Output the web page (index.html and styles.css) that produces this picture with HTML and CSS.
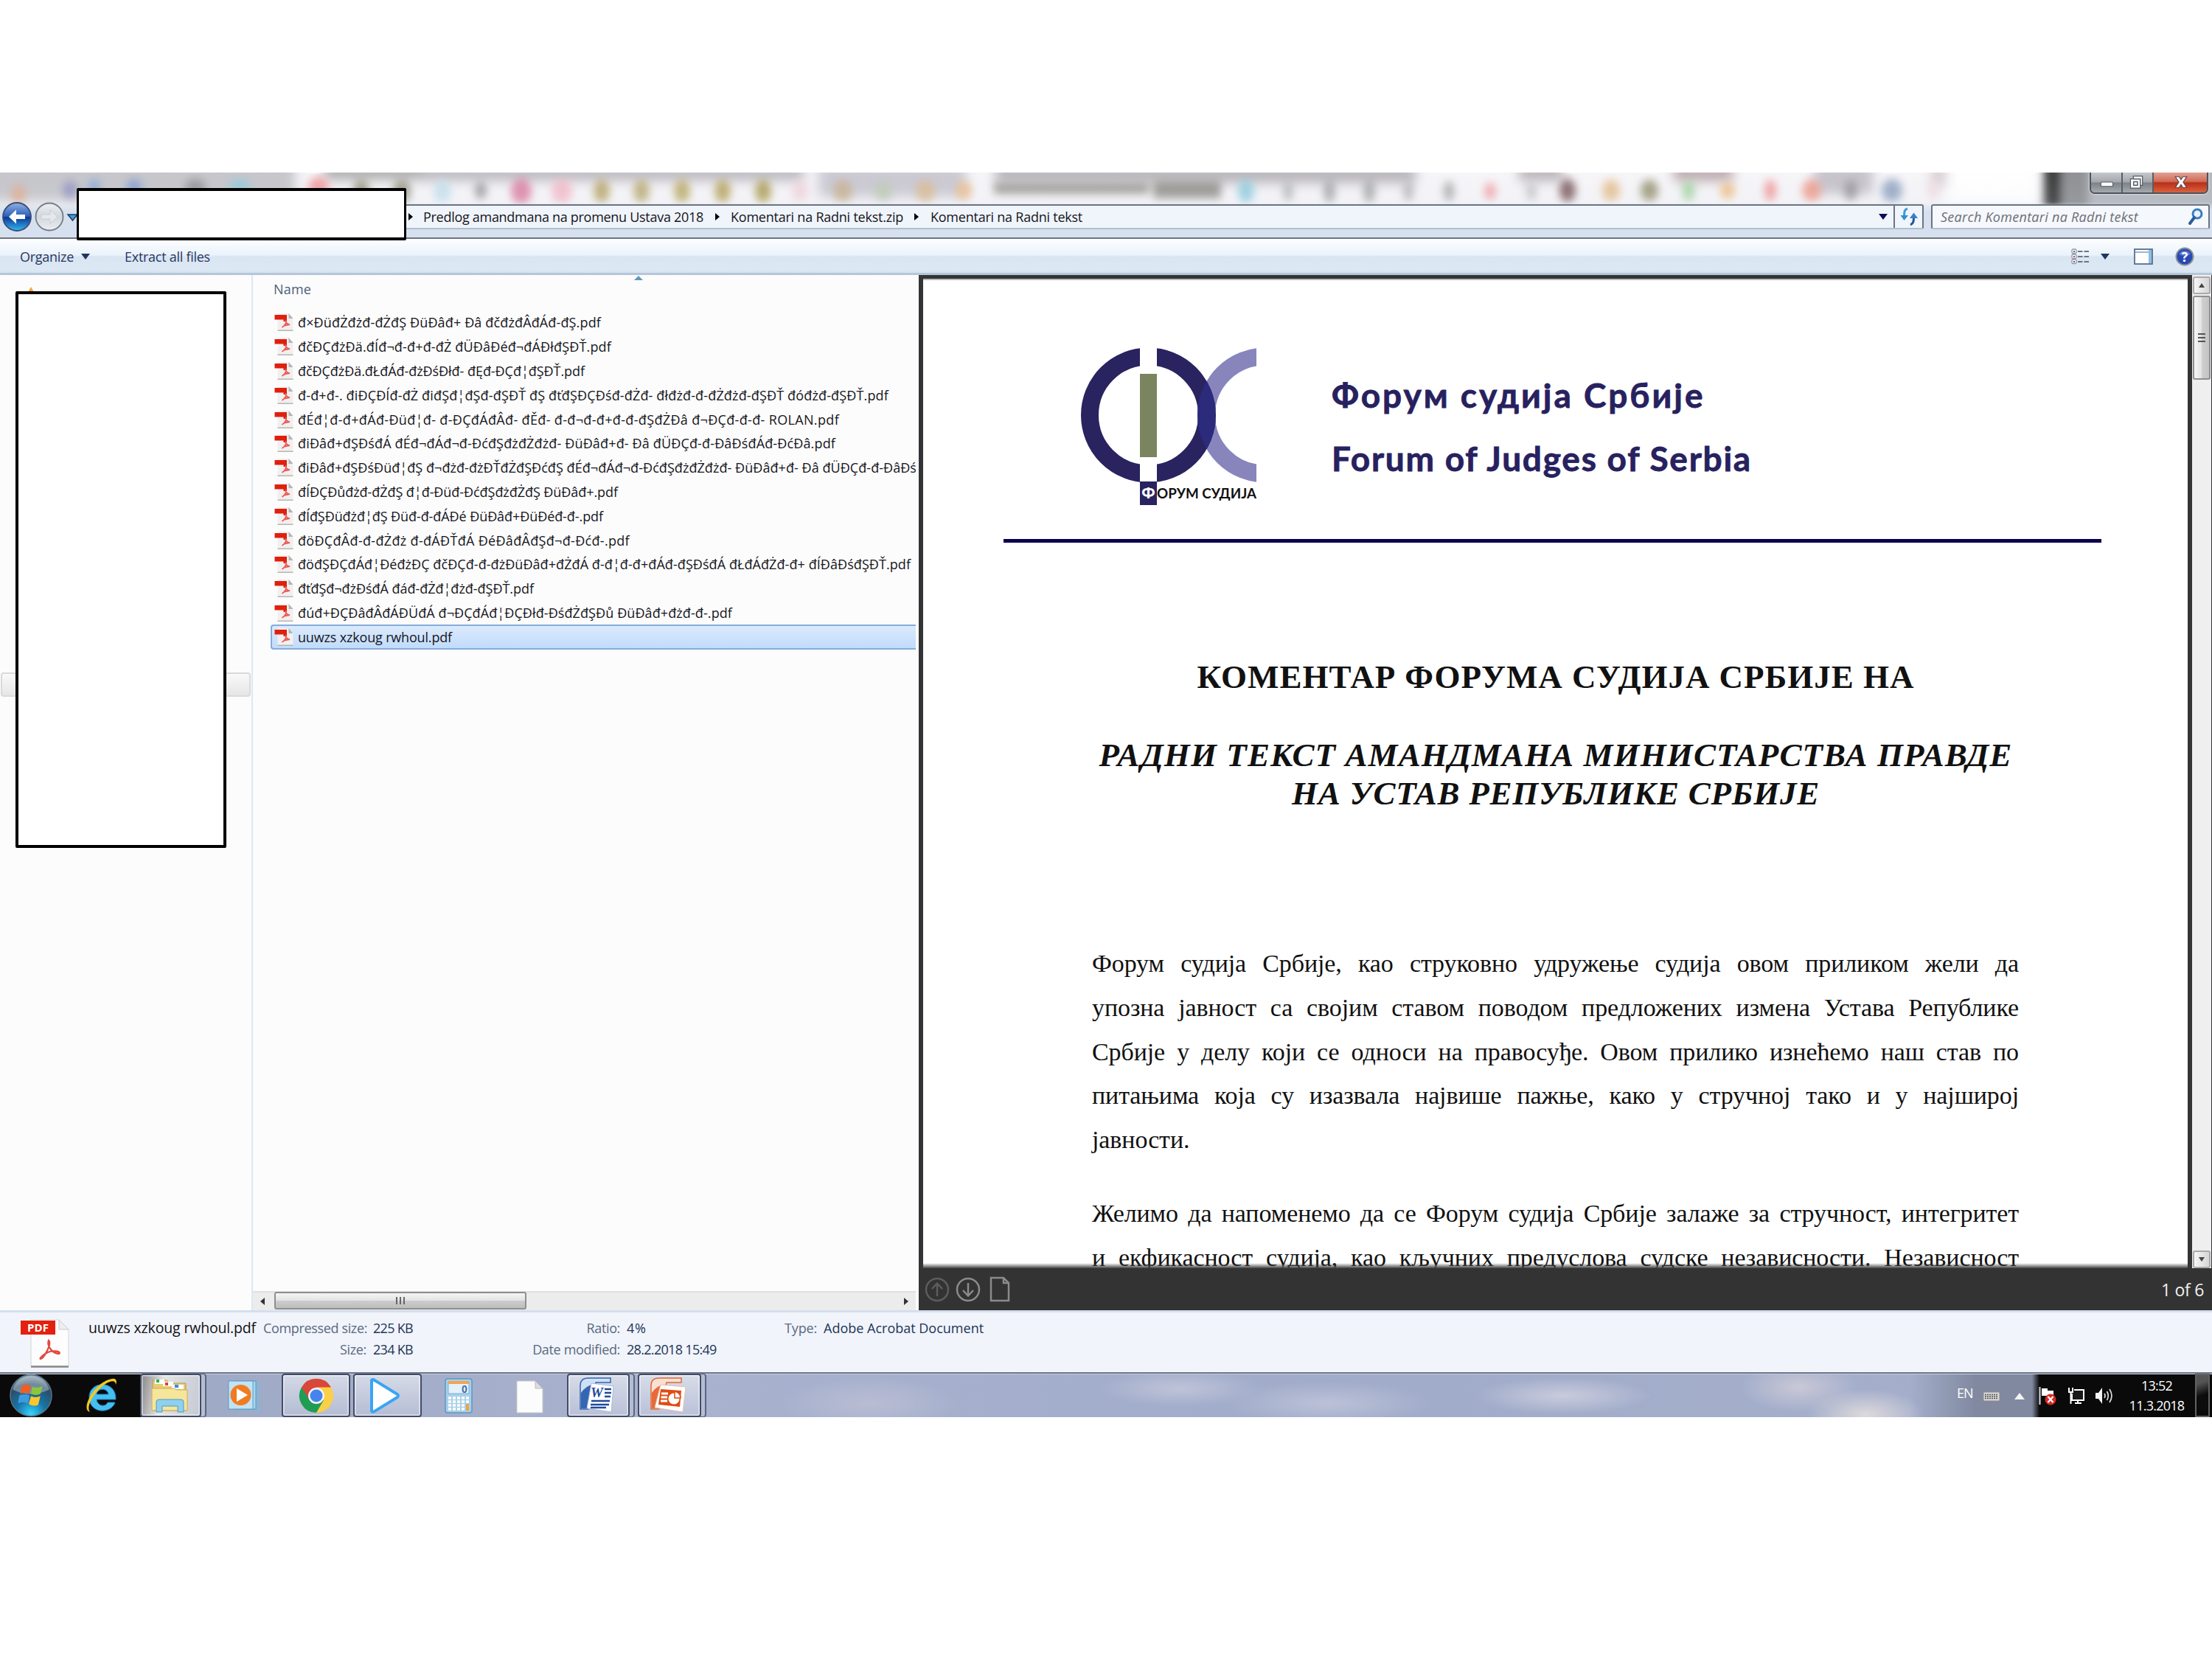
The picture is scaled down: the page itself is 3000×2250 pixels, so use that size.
FILE: index.html
```html
<!DOCTYPE html>
<html lang="en">
<head>
<meta charset="utf-8">
<title>Komentari na Radni tekst</title>
<link rel="stylesheet" href="styles.css">
</head>
<body>
<svg class="defs" aria-hidden="true">
  <defs>
    <symbol id="pdf" viewBox="0 0 26 26">
      <path d="M4 1H19L25 7V24H4Z" fill="#f1f0ef"/>
      <path d="M19 1L25 8H19Z" fill="#b4b4b4"/>
      <rect x="4" y="23.500" width="21" height="1.500" fill="#b5b5b5"/>
      <rect x="0" y="3" width="16.500" height="6.500" fill="#e01f0d"/>
      <rect x="12" y="9" width="4.500" height="3" fill="#e01f0d"/>
      <path d="M15 10C14 13 16 15 20.500 16.500M15.500 14C14 17 12.500 18.500 10 20M13 17.500L20.500 16" fill="none" stroke="#ee5a55" stroke-width="1.800"/>
    </symbol>
  </defs>
</svg>
<main class="screen">
  <header class="glass">
    <svg class="blur" viewBox="0 0 3000 90" preserveAspectRatio="none">
      <defs>
        <filter id="b"><feGaussianBlur stdDeviation="8"/></filter>
        <filter id="s"><feGaussianBlur stdDeviation="6"/></filter>
        <linearGradient id="f" x1="0" y1="0" x2="0" y2="1"><stop offset="0" stop-color="#d6e0ee" stop-opacity="0"/><stop offset=".45" stop-color="#d6e0ee" stop-opacity=".1"/><stop offset=".6" stop-color="#d6e0ee" stop-opacity="1"/></linearGradient>
      </defs>
      <rect width="3000" height="90" fill="#f6f5f8"/>
      <g filter="url(#b)">
        <rect x="-20" y="-20" width="420" height="60" fill="#c6c6cb"/><rect x="440" y="-10" width="130" height="20" fill="#aaa"/><rect x="570" y="-10" width="520" height="22" fill="#bcbac0"/>
        <rect x="1110" y="-10" width="200" height="44" fill="#cbc9d2"/><rect x="1350" y="-10" width="570" height="25" fill="#b8b5ba"/><rect x="2060" y="-10" width="60" height="22" fill="#b9b3b8"/><rect x="2270" y="-10" width="80" height="22" fill="#bba9ad"/><rect x="2460" y="-10" width="80" height="40" fill="#c6c2cb"/><rect x="2620" y="-10" width="20" height="30" fill="#d7cbd0"/>
        <rect x="2640" y="-10" width="125" height="55" fill="#fff"/>
      </g>
      <g filter="url(#s)" opacity=".78">
        <ellipse cx="25" cy="30" rx="10" ry="13" fill="#e2a98a"/><ellipse cx="95" cy="24" rx="10" ry="12" fill="#8d8cc0"/><ellipse cx="128" cy="21" rx="8" ry="12" fill="#7ea4d8"/><ellipse cx="182" cy="21" rx="10" ry="12" fill="#7697d0"/><ellipse cx="265" cy="21" rx="14" ry="12" fill="#8c8c90"/><ellipse cx="325" cy="21" rx="15" ry="12" fill="#8fcadc"/>
        <ellipse cx="432" cy="22" rx="14" ry="16" fill="#ef8a8c"/><ellipse cx="490" cy="26" rx="11" ry="16" fill="#86856c"/><ellipse cx="545" cy="26" rx="12" ry="16" fill="#88836f"/><ellipse cx="600" cy="26" rx="12" ry="16" fill="#bfdceb"/><ellipse cx="652" cy="25" rx="8" ry="12" fill="#888"/><ellipse cx="707" cy="26" rx="14" ry="18" fill="#d87296"/><ellipse cx="762" cy="26" rx="14" ry="17" fill="#f3b3c2"/>
        <ellipse cx="816" cy="26" rx="11" ry="16" fill="#b09b58"/><ellipse cx="870" cy="26" rx="11" ry="16" fill="#b3a064"/><ellipse cx="925" cy="26" rx="11" ry="16" fill="#b3a054"/><ellipse cx="980" cy="26" rx="11" ry="16" fill="#ae994c"/><ellipse cx="1035" cy="26" rx="11" ry="16" fill="#a29240"/>
        <ellipse cx="1085" cy="26" rx="11" ry="14" fill="#f1cfd6"/><ellipse cx="1143" cy="26" rx="13" ry="15" fill="#c7ad8a"/><ellipse cx="1198" cy="26" rx="12" ry="14" fill="#bccbb0"/><ellipse cx="1255" cy="26" rx="13" ry="15" fill="#dbb98c"/><ellipse cx="1307" cy="25" rx="11" ry="13" fill="#eebb85"/>
        <rect x="1348" y="14" width="210" height="16" fill="#8f8d86"/><rect x="1564" y="12" width="92" height="24" fill="#84827c"/>
        <ellipse cx="1690" cy="26" rx="11" ry="16" fill="#84c6dc"/><ellipse cx="1747" cy="26" rx="7" ry="14" fill="#aaa"/><ellipse cx="1803" cy="26" rx="8" ry="16" fill="#999"/><ellipse cx="1857" cy="26" rx="8" ry="16" fill="#999"/><ellipse cx="1910" cy="26" rx="7" ry="14" fill="#aaa"/><ellipse cx="1965" cy="26" rx="7" ry="14" fill="#999"/>
        <ellipse cx="2021" cy="26" rx="8" ry="12" fill="#f0969b"/><ellipse cx="2077" cy="26" rx="7" ry="13" fill="#bbb"/><ellipse cx="2126" cy="25" rx="11" ry="16" fill="#6a4447"/><ellipse cx="2185" cy="25" rx="12" ry="15" fill="#e3b780"/><ellipse cx="2237" cy="25" rx="12" ry="15" fill="#8b8761"/><ellipse cx="2290" cy="25" rx="9" ry="15" fill="#9bcf98"/><ellipse cx="2343" cy="25" rx="10" ry="12" fill="#edb777"/><ellipse cx="2401" cy="25" rx="8" ry="15" fill="#f08888"/><ellipse cx="2457" cy="25" rx="13" ry="15" fill="#ef927f"/><ellipse cx="2510" cy="25" rx="9" ry="14" fill="#908f93"/><ellipse cx="2566" cy="25" rx="14" ry="16" fill="#8499b8"/><ellipse cx="2622" cy="25" rx="8" ry="14" fill="#f2dbe1"/>
      </g>
      <g filter="url(#s)"><rect x="2772" y="-10" width="24" height="60" fill="#3d3d3d"/><rect x="2796" y="-10" width="40" height="62" fill="#8f9194"/><rect x="2832" y="-10" width="200" height="62" fill="#b4b8bd"/></g>
      <rect width="3000" height="90" fill="url(#f)"/>
    </svg>
    <div class="winbuttons">
      <span class="wb min"><svg viewBox="0 0 43 28"><rect x="14" y="13.500" width="17" height="6" rx="1" fill="#fff" stroke="#555b66" stroke-width="1.200"/></svg></span>
      <span class="wb max"><svg viewBox="0 0 42 28"><path d="M15 5H28V18H25V22H11V9H15Z" fill="#fff" stroke="#555b66" stroke-width="1.300"/><path d="M15.500 13H21V18H15.500ZM15 9H25V18" fill="none" stroke="#555b66" stroke-width="1.500"/></svg></span>
      <span class="wb close"><svg viewBox="0 0 74 28"><path d="M30 6H35.500L38 10L40.500 6H46L41 13.500L46 21H40.500L38 17L35.500 21H30L35 13.500Z" fill="#fff" stroke="#5e4346" stroke-width="1.200"/></svg></span>
    </div>
    <div class="navrow">
      <svg class="backfwd" viewBox="0 0 110 46">
        <defs>
          <linearGradient id="bk" x1="0" y1="0" x2="0" y2="1"><stop offset="0" stop-color="#8fb2e2"/><stop offset=".48" stop-color="#2c5fb8"/><stop offset=".52" stop-color="#0c3796"/><stop offset="1" stop-color="#35b8f0"/></linearGradient>
          <linearGradient id="fw" x1="0" y1="0" x2="0" y2="1"><stop offset="0" stop-color="#eceff3"/><stop offset=".5" stop-color="#d3d8de"/><stop offset="1" stop-color="#e9eef3"/></linearGradient>
        </defs>
        <circle cx="23" cy="22" r="19" fill="url(#bk)" stroke="#3b4c72" stroke-width="1.800"/>
        <path d="M12 22L22 12.500V19H34V25H22V31.500Z" fill="#fff"/>
        <circle cx="67" cy="22" r="18.500" fill="url(#fw)" stroke="#757b84" stroke-width="1.800"/>
        <path d="M78 22L68 12.500V19H56V25H68V31.500Z" fill="#e5e8ec" stroke="#c9cdd3"/>
        <path d="M92 19H105L98.500 27Z" fill="#3d9ad0" stroke="#1b3b66" stroke-width="1.500"/>
      </svg>
      <div class="address">
        <span class="crumbs">
          <i class="sep"></i><span class="c1">Predlog amandmana na promenu Ustava 2018</span>
          <i class="sep"></i><span class="c2">Komentari na Radni tekst.zip</span>
          <i class="sep"></i><span class="c3">Komentari na Radni tekst</span>
        </span>
        <i class="drop"></i>
        <span class="refresh"><svg viewBox="0 0 26 26"><path d="M11 2C7 3 6.500 6 6.500 12" fill="none" stroke="#3a9bd8" stroke-width="3"/><path d="M1.500 11H12L6.500 18Z" fill="#2f8fd0"/><path d="M15 24C19 22 19.500 19 19.500 14" fill="none" stroke="#24588f" stroke-width="3"/><path d="M14 15H25L19.500 7.500Z" fill="#3580c4"/></svg></span>
      </div>
      <div class="search"><span>Search Komentari na Radni tekst</span>
        <svg viewBox="0 0 24 24"><circle cx="14" cy="8" r="6" fill="#e6f3fc" stroke="#3a7cc0" stroke-width="3"/><path d="M10 13L4 21" stroke="#2a5c98" stroke-width="4" stroke-linecap="round"/></svg>
      </div>
    </div>
    <div class="redact r1"></div>
  </header>

  <nav class="toolbar">
    <span class="org">Organize</span><i class="drop"></i>
    <span class="ext">Extract all files</span>
    <span class="tools">
      <svg class="views" viewBox="0 0 26 22"><g fill="#fff" stroke="#8d97a5" stroke-width="1.300"><rect x="1" y="1" width="6" height="5.500" rx="1.500"/><rect x="1" y="8" width="6" height="5.500" rx="1.500"/><rect x="1" y="15" width="6" height="5.500" rx="1.500"/></g><path d="M9 4H24M9 11H24M9 18H24" stroke="#70757e" stroke-width="1.800" stroke-dasharray="6.500 2"/><rect x="3" y="10" width="2" height="2" fill="#c44"/><rect x="3" y="3" width="2" height="2" fill="#568"/><rect x="3" y="17" width="2" height="2" fill="#568"/></svg>
      <i class="drop"></i>
      <svg class="pane" viewBox="0 0 26 22"><rect x="1" y="1" width="24" height="20" fill="#fff" stroke="#56708f" stroke-width="1.800"/><path d="M2 5H20" stroke="#7d9cbc" stroke-width="1.500"/><rect x="20" y="2" width="4" height="18" fill="#8dc0dc"/></svg>
      <svg class="help" viewBox="0 0 26 26"><circle cx="13" cy="13" r="11.500" fill="#2848b4" stroke="#8b8f98" stroke-width="2"/><path d="M5 10A9 9 0 0 1 21 10Q13 14 5 10Z" fill="#7d98dd" opacity=".6"/><text x="13" y="19.500" text-anchor="middle" class="q">?</text></svg>
    </span>
  </nav>

  <section class="content">
    <aside class="tree"><span class="star"></span><span class="treesel"></span><div class="redact r2"></div></aside>
    <div class="files">
      <div class="colhead"><span>Name</span><i class="sort"></i></div>
      <ul class="list">
        <li><svg><use href="#pdf"/></svg><span>đ×ÐüđŻđżđ-đŻđŞ ÐüÐâđ+ Ðâ đčđżđÂđÁđ-đŞ.pdf</span></li>
        <li><svg><use href="#pdf"/></svg><span>đčÐÇđżÐä.đÍđ¬đ-đ+đ-đŻ đÜÐâÐéđ¬đÁÐłđŞÐŤ.pdf</span></li>
        <li><svg><use href="#pdf"/></svg><span>đčÐÇđżÐä.đŁđÁđ-đżÐśÐłđ- đĘđ-ÐÇđ¦đŞÐŤ.pdf</span></li>
        <li><svg><use href="#pdf"/></svg><span>đ-đ+đ-. điÐÇÐÍđ-đŻ điđŞđ¦đŞđ-đŞÐŤ đŞ đťđŞÐÇÐśđ-đŻđ- đłđżđ-đ-đŻđżđ-đŞÐŤ đóđżđ-đŞÐŤ.pdf</span></li>
        <li><svg><use href="#pdf"/></svg><span>đÉđ¦đ-đ+đÁđ-Ðüđ¦đ- đ-ÐÇđÁđÂđ- đĚđ- đ-đ¬đ-đ+đ-đ-đŞđŻÐâ đ¬ÐÇđ-đ-đ- ROLAN.pdf</span></li>
        <li><svg><use href="#pdf"/></svg><span>điÐâđ+đŞÐśđÁ đÉđ¬đÁđ¬đ-ÐćđŞđżđŻđżđ- ÐüÐâđ+đ- Ðâ đÜÐÇđ-đ-ÐâÐśđÁđ-ÐćÐâ.pdf</span></li>
        <li><svg><use href="#pdf"/></svg><span>điÐâđ+đŞÐśÐüđ¦đŞ đ¬đżđ-đżÐŤđŻđŞÐćđŞ đÉđ¬đÁđ¬đ-ÐćđŞđżđŻđżđ- ÐüÐâđ+đ- Ðâ đÜÐÇđ-đ-ÐâÐś</span></li>
        <li><svg><use href="#pdf"/></svg><span>đÍÐÇÐůđżđ-đŻđŞ đ¦đ-Ðüđ-ÐćđŞđżđŻđŞ ÐüÐâđ+.pdf</span></li>
        <li><svg><use href="#pdf"/></svg><span>đÍđŞÐüđżđ¦đŞ Ðüđ-đ-đÁÐé ÐüÐâđ+ÐüÐéđ-đ-.pdf</span></li>
        <li><svg><use href="#pdf"/></svg><span>đöÐÇđÂđ-đ-đŻđż đ-đÁÐŤđÁ ÐéÐâđÂđŞđ¬đ-Ðćđ-.pdf</span></li>
        <li><svg><use href="#pdf"/></svg><span>đöđŞÐÇđÁđ¦ÐéđżÐÇ đčÐÇđ-đ-đżÐüÐâđ+đŻđÁ đ-đ¦đ-đ+đÁđ-đŞÐśđÁ đŁđÁđŻđ-đ+ đÍÐâÐśđŞÐŤ.pdf</span></li>
        <li><svg><use href="#pdf"/></svg><span>đťđŞđ¬đżÐśđÁ đáđ-đŻđ¦đżđ-đŞÐŤ.pdf</span></li>
        <li><svg><use href="#pdf"/></svg><span>đúđ+ÐÇÐâđÂđÁÐÜđÁ đ¬ÐÇđÁđ¦ÐÇÐłđ-ÐśđŻđŞÐů ÐüÐâđ+đżđ-đ-.pdf</span></li>
        <li class="sel"><svg><use href="#pdf"/></svg><span>uuwzs xzkoug rwhoul.pdf</span></li>
      </ul>
      <div class="hscroll"><i class="la"></i><span class="hthumb"><i></i><i></i><i></i></span><i class="ra"></i></div>
    </div>
    <div class="preview">
      <div class="viewer">
        <article class="page">
          <div class="letterhead">
            <svg class="logo" viewBox="0 0 244 220">
              <defs><clipPath id="cc"><rect x="0" y="0" width="239" height="220"/></clipPath><clipPath id="ring"><path d="M0 0H81V220H0ZM104 0H244V220H104Z"/></clipPath><clipPath id="disc"><circle cx="92.500" cy="96" r="91.500"/></clipPath></defs>
              <circle cx="250.500" cy="96" r="79.500" fill="none" stroke="#8885bd" stroke-width="24" clip-path="url(#cc)"/>
              <circle cx="92.500" cy="96" r="79.500" fill="none" stroke="#29235f" stroke-width="24" clip-path="url(#ring)"/>
              <g clip-path="url(#disc)"><circle cx="250.500" cy="96" r="79.500" fill="none" stroke="#2c2a7b" stroke-width="24"/></g>
              <rect x="81" y="40" width="23" height="113" fill="#7a8560"/>
              <rect x="81" y="186" width="23" height="32" fill="#29235f"/>
              <text x="92.500" y="209" text-anchor="middle" class="lf">Ф</text>
              <text x="104" y="209" textLength="135" lengthAdjust="spacingAndGlyphs" class="lt">ОРУМ СУДИЈА</text>
            </svg>
            <div class="org-name"><span class="n1">Форум судија Србије</span><br><span class="n2">Forum of Judges of Serbia</span></div>
          </div>
          <h1>КОМЕНТАР ФОРУМА СУДИЈА СРБИЈЕ НА</h1>
          <h2><span class="h2a">РАДНИ ТЕКСТ АМАНДМАНА МИНИСТАРСТВА ПРАВДЕ</span><br><span class="h2b">НА УСТАВ РЕПУБЛИКЕ СРБИЈЕ</span></h2>
          <p><span>Форум судија Србије, као струковно удружење судија овом приликом жели да</span><span>упозна јавност са својим ставом поводом предложених измена Устава Републике</span><span>Србије у делу који се односи на правосуђе. Овом прилико изнећемо наш став по</span><span>питањима која су изазвала највише пажње, како у стручној тако и у најширој</span><span class="last">јавности.</span></p>
          <p><span>Желимо да напоменемо да се Форум судија Србије залаже за стручност, интегритет</span><span>и екфикасност судија, као кључних предуслова судске независности. Независност</span></p>
        </article>
        <div class="vscroll"><span class="vb"><i class="up"></i></span><span class="vthumb"><i></i><i></i><i></i></span><span class="vb end"><i class="dn"></i></span></div>
      </div>
      <footer class="pager">
        <svg viewBox="0 0 120 36"><g fill="none" stroke-width="2.500"><g stroke="#5d5d5d"><circle cx="17" cy="18" r="15"/><path d="M17 27V10M10 17L17 9.500L24 17"/></g><g stroke="#8b8b8b"><circle cx="59" cy="18" r="15"/><path d="M59 9V26M52 19L59 26.500L66 19"/></g><path d="M90 2H107L114 9V33H90ZM107 2V9H114" stroke="#8b8b8b"/></g></svg>
        <span class="pg">1 of 6</span>
      </footer>
    </div>
  </section>

  <section class="details">
    <svg class="bigpdf" viewBox="0 0 68 68"><path d="M14 2H52L65 15V65H14Z" fill="#fdfdfd" stroke="#d4d4d4"/><path d="M52 2V15H65Z" fill="#eee" stroke="#ccc"/><path d="M14 65.500H65" stroke="#888" stroke-width="2.500"/><rect x="0" y="3" width="47" height="19" fill="#e3210e"/><text x="23.500" y="18" text-anchor="middle" class="pt">PDF</text><path d="M38 30C35 38 44 48 52 48C56 45 44 43 37 46C31 49 25 54 27 55C31 55 43 34 38 30Z" fill="none" stroke="#e24a40" stroke-width="2.300"/></svg>
    <span class="fname">uuwzs xzkoug rwhoul.pdf</span>
    <dl class="d1"><dt>Compressed size:</dt><dd>225 KB</dd><dt>Size:</dt><dd>234 KB</dd></dl>
    <dl class="d2"><dt>Ratio:</dt><dd class="pct">4%</dd><dt>Date modified:</dt><dd>28.2.2018 15:49</dd></dl>
    <dl class="d3"><dt>Type:</dt><dd>Adobe Acrobat Document</dd></dl>
  </section>

  <footer class="taskbar">
    <span class="slot s-start"><svg viewBox="0 0 60 60"><defs><radialGradient id="orb" cx=".5" cy=".95" r=".9"><stop offset="0" stop-color="#35d6ff"/><stop offset=".4" stop-color="#1775a8"/><stop offset=".8" stop-color="#2c4c66"/><stop offset="1" stop-color="#8298a8"/></radialGradient></defs><circle cx="30" cy="30" r="28.500" fill="url(#orb)" stroke="#5a7488" stroke-width="1.500"/><path d="M5 22A26 26 0 0 1 55 22Q30 34 5 22Z" fill="#dce6ec" opacity=".4"/><path d="M17 17Q23 13 30 17L28 28Q21 25 15 28Z" fill="#ee5e26"/><path d="M32 18Q39 21 46 17L43 28Q37 31 30 28Z" fill="#8dc63c"/><path d="M14 30Q21 27 28 30L26 41Q19 38 12 41Z" fill="#3f9be0"/><path d="M30 31Q36 34 43 31L40 43Q34 46 27 42Z" fill="#fcc62c"/></svg></span>
    <span class="slot s-ie"><svg viewBox="0 0 48 50"><path d="M43 30H17C18 39 29 41 32 34H42C37 50 7 50 7 27C7 4 44 3 43 30ZM17 23H33C32 14 18 14 17 23Z" fill="#45bff0" stroke="#1d82c4" stroke-width="1" fill-rule="evenodd"/><path d="M8 47C-6 44 15 5 38 2C44 1 45 6 43 10C43 4 37 4 29 9C14 19 2 40 8 47Z" fill="#f6c81e"/></svg></span>
    <span class="slot btn dbl s-exp"><svg viewBox="0 0 52 48"><path d="M3 3H22L26 7H48V44H3Z" fill="#e5cc72" stroke="#b99b47"/><rect x="6" y="2" width="13" height="6" fill="#fff"/><rect x="8" y="2" width="4" height="4" fill="#2fb24a"/><rect x="17" y="5" width="14" height="6" fill="#fff"/><rect x="20" y="6" width="4" height="4" fill="#d8432f"/><rect x="29" y="9" width="16" height="6" fill="#fff"/><rect x="33" y="9" width="5" height="4" fill="#2f8fe0"/><path d="M2 14H32L36 16H50V44H2Z" fill="#f6e59b" stroke="#c9ad57"/><path d="M8 46V32Q8 29 12 29H41Q45 29 45 32V46H37V38H16V46Z" fill="#8fd0ee" stroke="#4c9bc4"/></svg></span>
    <span class="slot s-wmp"><svg viewBox="0 0 50 44"><path d="M12 2H42V36L46 42H20Z" fill="#7fb9da" opacity=".7"/><rect x="8" y="2" width="30" height="38" fill="#a9d5ee" stroke="#5b97bd"/><rect x="1" y="2" width="33" height="38" fill="#c2e3f5" stroke="#5b9cc4"/><circle cx="17.500" cy="21" r="14" fill="#f07c22"/><path d="M12 12L27 21L12 30Z" fill="#fff"/></svg></span>
    <span class="slot btn s-chr"><svg viewBox="0 0 48 48"><circle cx="24" cy="24" r="23" fill="#fbd046"/><path d="M24 24L4 12.500A23 23 0 0 0 24 47L34 30Z" fill="#1f9d57"/><path d="M4 12.500A23 23 0 0 1 44 12.500H24L14 28Z" fill="#d9463a"/><circle cx="24" cy="24" r="11" fill="#f3f3f3"/><circle cx="24" cy="24" r="8.500" fill="#4683ee"/></svg></span>
    <span class="slot btn s-play"><svg viewBox="0 0 44 50"><path d="M4 4Q5 2 8 4L39 23Q41 25 39 27L8 46Q4 48 4 45Z" fill="#fff" stroke="#3aa4f4" stroke-width="4"/></svg></span>
    <span class="slot s-calc"><svg viewBox="0 0 38 48"><rect x="1" y="1" width="36" height="46" rx="3" fill="#a8d0ea" stroke="#5d97c2" stroke-width="1.500"/><rect x="5" y="5" width="28" height="16" fill="#e4f1fa" stroke="#7cacd0"/><rect x="5" y="4" width="28" height="4" fill="#f0a650"/><text x="27" y="19.500" text-anchor="middle" class="ct">0</text><path d="M5 27H34M5 32H34M5 37H28M5 42H28" stroke="#fff" stroke-width="3.500" stroke-dasharray="4 2"/><rect x="29" y="35" width="4" height="9" fill="#f3a43e"/></svg></span>
    <span class="slot s-doc"><svg viewBox="0 0 38 46"><path d="M1 1H26L36 11V44H1Z" fill="#fcfcfc" stroke="#c9c9c9"/><path d="M26 1V11H36Z" fill="#ddd" stroke="#bbb"/></svg></span>
    <span class="slot btn dbl s-word"><svg viewBox="0 0 48 50"><path d="M1 12Q1 2 12 2H42V8H22L12 44H1Z" fill="#cfe0f6" stroke="#3564b0" stroke-width="1.500"/><path d="M2 22Q9 12 18 11L10 43H2Z" fill="#3466b2"/><path d="M16 9L46 13L43 48L10 43Z" fill="#fff" stroke="#a9bcd8"/><text x="15" y="28" class="wt">W</text><path d="M34 17H43M34 22H43M34 27H42M16 33H41M15 38H40M15 42H36" stroke="#1f4a99" stroke-width="2.500"/></svg></span>
    <span class="slot btn dbl s-ppt"><svg viewBox="0 0 48 50"><path d="M1 12Q1 2 12 2H42V8H22L12 44H1Z" fill="#fbe0d2" stroke="#e06a35" stroke-width="1.500"/><path d="M2 22Q9 12 18 11L10 43H2Z" fill="#e86a38"/><path d="M14 11L48 14L44 48L6 42Z" fill="#fff" stroke="#e5bfae"/><path d="M14 17L42 19L40 41L11 38Z" fill="#e04c12"/><path d="M15 23H24M14.500 28H23M14 33H23" stroke="#fff" stroke-width="3"/><circle cx="32" cy="30" r="7.500" fill="#fff"/><path d="M33 29V20Q41 22 41 29Z" fill="#fff" stroke="#e04c12" stroke-width="1.500"/></svg></span>
    <span class="tray">
      <b class="en">EN</b>
      <svg class="kb" viewBox="0 0 24 20"><path d="M12 7C12 2 16 5 19 1" fill="none" stroke="#888"/><rect x="1" y="7" width="22" height="12" rx="1" fill="#d8d8d8" stroke="#8b8b8b"/><path d="M3 10.500H21M3 13H21M3 15.500H21" stroke="#555" stroke-width="1.300" stroke-dasharray="2 1"/></svg>
      <i class="more"></i>
      <svg class="flag" viewBox="0 0 26 26"><path d="M1.500 1V25" stroke="#ddd" stroke-width="2"/><path d="M4 3H12V6H20V13H4Z" fill="#fff"/><circle cx="16" cy="18" r="7.500" fill="#d92a24"/><path d="M12.500 14L19.500 22M19.500 14L12.500 22" stroke="#fff" stroke-width="2.200"/></svg>
      <svg class="net" viewBox="0 0 24 26"><path d="M9 5H22V19H6V10" fill="#181818" stroke="#fff" stroke-width="2"/><path d="M2 2V8H7V2M4.500 8V24M10 23H19M14 19V23" fill="none" stroke="#fff" stroke-width="2"/></svg>
      <svg class="vol" viewBox="0 0 26 26"><path d="M1 9H5L10 2V24L5 17H1Z" fill="#f4f4f4"/><path d="M13 10Q15 13 13 16M16.500 7Q20 13 16.500 19M20 4Q26 13 20 22" fill="none" stroke="#ddd" stroke-width="1.700"/></svg>
      <span class="clock"><b>13:52</b><b>11.3.2018</b></span>
      <span class="desk"></span>
    </span>
  </footer>
</main>
</body>
</html>
```
FILE: styles.css
```css
* { box-sizing: border-box; }
html, body { margin: 0; background: #fff; }
body { width: 3000px; height: 2250px; overflow: hidden; padding-top: 234px; font: 18px/1 "Open Sans", "Noto Sans", sans-serif; color: #16161c; }
b { font-weight: inherit; }
ul, dl, dd, p, h1, h2 { margin: 0; padding: 0; list-style: none; }
i { font-style: normal; }
span, b, dt, dd { white-space: nowrap; }
.defs { position: absolute; width: 0; height: 0; }
.screen { width: 3000px; height: 1688px; display: flex; flex-direction: column; background: #fcfcfc; }

/* title bar and address row */
.glass { position: relative; height: 90px; border-bottom: 2px solid #6f7480; display: flex; flex-direction: column; }
.blur { position: absolute; left: 0; top: 0; width: 3000px; height: 88px; }
.winbuttons { position: relative; align-self: flex-end; display: flex; width: 161px; height: 29px; margin-right: 5px; border: 2px solid #4d535c; border-top: 0; border-radius: 0 0 7px 7px; overflow: hidden; box-shadow: 0 0 3px #fff; }
.wb { height: 27px; background: linear-gradient(#c5c8cb, #a3a7ac 48%, #7d8288 52%, #a5aaae); border-right: 2px solid #5a5f68; }
.wb svg { display: block; width: 100%; height: 27px; }
.min { width: 43px; }
.max { width: 42px; }
.close { flex: 1; border: 0; background: linear-gradient(#e0a294, #cf6b55 45%, #b92e18 52%, #d9633f); }
.navrow { position: relative; display: flex; align-items: center; height: 34px; margin-top: 14px; padding-right: 3px; }
.backfwd { width: 110px; height: 46px; margin: 2px 420px 0 0; }
.address { display: flex; align-items: center; width: 2079px; height: 34px; border: 2px solid #6b7482; border-bottom-color: #b3bfcd; border-left: 0; background: #f0f4fb; border-radius: 0 3px 3px 0; }
.crumbs { display: flex; align-items: center; padding-left: 24px; flex: 1; line-height: 30px; }
.sep { border: 5px solid transparent; border-left: 6px solid #000; border-right: 0; }
.c1 { width: 380px; margin: 0 16px 0 14px; letter-spacing: -.291px; }
.c2 { width: 234px; margin: 0 15px 0 15px; letter-spacing: -.23px; }
.c3 { margin-left: 16px; letter-spacing: -.239px; }
.drop { border: 6px solid transparent; border-top: 8px solid #0b0b58; border-bottom: 0; }
.address .drop { margin-right: 8px; }
.refresh { width: 39px; height: 30px; border-left: 2px solid #6b7482; padding: 2px 0 0 6px; }
.refresh svg { width: 26px; height: 26px; }
.search { display: flex; justify-content: space-between; align-items: center; width: 378px; height: 34px; margin-left: 10px; padding: 0 5px 0 11px; border: 2px solid #6b7482; border-bottom-color: #b3bfcd; background: #f5f8fd; border-radius: 3px; color: #6d6d74; font-style: italic; letter-spacing: .281px; }
.search svg { width: 24px; height: 24px; }
.redact { position: absolute; background: #fff; border: 4px solid #000; border-radius: 2px; }
.r1 { left: 104px; top: 21px; width: 447px; height: 71px; z-index: 2; border-width: 4px 3px; }

/* command bar */
.toolbar { display: flex; align-items: center; height: 49px; padding: 1px 24px 0 27px; background: linear-gradient(#fdfeff, #eaf2fb 48%, #dae5f3 52%, #dde8f5 90%, #d5e2f0); border-bottom: 3px solid #b5c6d9; color: #27395e; letter-spacing: -.27px; }
.toolbar .drop { border-top-color: #1f3660; margin-left: 10px; }
.org { width: 73px; }
.ext { margin-left: 47px; }
.tools { margin-left: auto; display: flex; align-items: center; }
.views { width: 26px; height: 22px; }
.tools .drop { margin: 0 33px 0 14px; }
.pane { width: 26px; height: 22px; margin-right: 30px; }
.help { width: 26px; height: 26px; }
.q { font: bold 18px "Open Sans", sans-serif; fill: #fff; }

/* panes */
.content { display: flex; height: 1404px; }
.tree { position: relative; width: 343px; border-right: 2px solid #dde7f3; }
.star { position: absolute; left: 38px; top: 16px; border: 4px solid transparent; border-bottom: 7px solid #f4a63c; border-top: 0; }
.treesel { position: absolute; left: 1px; top: 539px; width: 339px; height: 33px; border: 2px solid #dadada; border-radius: 4px; background: linear-gradient(#f9f9f9, #e6e6e6); }
.r2 { left: 21px; top: 22px; width: 286px; height: 755px; }
.files { width: 899px; display: flex; flex-direction: column; overflow: hidden; }
.colhead { position: relative; height: 48px; padding: 10px 0 0 28px; color: #4c607a; letter-spacing: .17px; }
.colhead span { line-height: 18px; }
.sort { position: absolute; left: 517px; top: 1px; border: 6px solid transparent; border-bottom: 6px solid #5d9bb8; border-top: 0; }
.list { display: flex; flex-direction: column; flex: 1; padding-left: 24px; }
.list li { display: flex; align-items: center; height: 32.8px; padding-left: 5px; flex: none; overflow: hidden; }
.list svg { width: 27px; height: 26px; margin-right: 5px; flex: none; }
.list span { line-height: 30px; }
.list li:nth-child(1) { letter-spacing: .135px; }
.list li:nth-child(2) { letter-spacing: .162px; }
.list li:nth-child(3) { letter-spacing: -.054px; }
.list li:nth-child(4) { letter-spacing: .147px; }
.list li:nth-child(5) { letter-spacing: .336px; }
.list li:nth-child(6) { letter-spacing: .147px; }
.list li:nth-child(7) { letter-spacing: .051px; }
.list li:nth-child(8) { letter-spacing: -.063px; }
.list li:nth-child(9) { letter-spacing: -.079px; }
.list li:nth-child(10) { letter-spacing: .313px; }
.list li:nth-child(11) { letter-spacing: .065px; }
.list li:nth-child(12) { letter-spacing: -.032px; }
.list li:nth-child(13) { letter-spacing: .089px; }
.list .sel { height: 34px; margin-top: -.5px; letter-spacing: -.171px; border: 2px solid #84acdd; border-right: 0; border-radius: 4px 0 0 4px; background: linear-gradient(#dceafc, #c1dbfc); padding-left: 3px; }
.hscroll { display: flex; align-items: center; height: 26px; border-top: 2px solid #e0e0e0; background: #ececec; }
.la { margin: 0 13px 0 10px; border: 5px solid transparent; border-right: 6px solid #333; border-left: 0; }
.hthumb { display: flex; gap: 3px; justify-content: center; align-items: center; width: 342px; height: 24px; margin-top: -2px; border: 2px solid #8f8f8f; border-radius: 3px; background: linear-gradient(#f5f5f5, #e3e3e3 48%, #cdcdcd 52%, #bdbdbd); }
.hthumb i { width: 2px; height: 10px; background: #666; }
.ra { margin-left: auto; margin-right: 10px; border: 5px solid transparent; border-left: 6px solid #333; border-right: 0; }

/* document preview */
.preview { width: 1754px; margin-left: 4px; display: flex; flex-direction: column; background: #333436; }
.viewer { display: flex; height: 1347px; overflow: hidden; padding: 5px 0 0 6px; }
.page { position: relative; width: 1715px; height: 1342px; overflow: hidden; background: #fff; font-family: "Liberation Serif", serif; color: #111; border-top: 2px solid #bbb; }
.page::after { content: ""; position: absolute; left: 0; right: 0; bottom: 0; height: 7px; background: linear-gradient(rgba(51,51,51,0), #444); }
.letterhead { display: flex; width: 1489px; height: 356px; margin-left: 109px; border-bottom: 5px solid #0c0050; }
.logo { width: 244px; height: 220px; margin: 87px 0 0 104px; }
.lf { font: bold 22px "Open Sans", sans-serif; fill: #fff; }
.lt { font: bold 19px Lato, "Open Sans", sans-serif; fill: #111; }
.org-name { margin: 113px 0 0 97px; font: bold 46px/86px Lato, "Open Sans", sans-serif; color: #27215f; -webkit-text-stroke: .8px #27215f; }
.n1 { letter-spacing: 2.97px; }
.n2 { letter-spacing: 1.75px; }
h1, h2 { text-align: center; font-size: 45px; line-height: 52px; font-weight: bold; margin-left: 1px; }
h1 { margin-top: 156px; letter-spacing: .99px; }
h2 { font-style: italic; margin-top: 54px; }
.h2a { letter-spacing: 1.09px; }
.h2b { letter-spacing: .75px; }
.page p { width: 1257px; margin-left: 229px; font-size: 34px; line-height: 59.75px; letter-spacing: -.1px; }
h2 + p { margin-top: 175px; }
p + p { margin-top: 40px; }
.page p span { display: block; white-space: normal; text-align: justify; text-align-last: justify; }
.page p .last { text-align-last: left; }
.vscroll { display: flex; flex-direction: column; width: 26px; margin: -5px 0 0 6px; padding: 2px 1px 0; background: #efefef; }
.vb { display: flex; align-items: center; justify-content: center; height: 24px; border: 2px solid #a9a9a9; border-radius: 3px; background: linear-gradient(90deg, #f6f6f6, #d5d5d5); }
.vb.end { margin-top: auto; }
.up { border: 4px solid transparent; border-bottom: 6px solid #444; border-top: 0; }
.dn { border: 4px solid transparent; border-top: 6px solid #444; border-bottom: 0; }
.vthumb { display: flex; flex-direction: column; gap: 3px; align-items: center; justify-content: center; height: 114px; margin-top: 2px; border: 2px solid #8f8f8f; border-radius: 3px; background: linear-gradient(90deg, #f7f7f7, #e4e4e4 48%, #cfcfcf 52%, #c3c3c3); }
.vthumb i { width: 10px; height: 2px; background: #555; }
.pager { display: flex; align-items: center; justify-content: space-between; height: 57px; padding: 1px 11px 0 8px; background: #333; color: #f0f0f0; font-size: 23px; letter-spacing: -.3px; }
.pager svg { width: 120px; height: 36px; }

/* file details */
.details { display: flex; height: 84px; padding-top: 7px; background: #f1f4fb; border-top: 3px solid #d3dfeb; color: #1e3557; }
.bigpdf { width: 68px; height: 68px; margin: 1px 24px 0 28px; }
.fname { width: 237px; font-size: 19.5px; line-height: 27px; color: #111; letter-spacing: -.16px; }
dl { display: grid; grid-auto-rows: 28.5px; line-height: 28px; column-gap: 9px; align-content: start; }
dt { text-align: right; color: #5a6a80; letter-spacing: -.35px; }
dd { letter-spacing: -.69px; }
.d1 { width: 342px; grid-template-columns: 140px 1fr; }
.d2 { width: 365px; grid-template-columns: 142px 1fr; }
.d2 .pct { letter-spacing: .7px; }
.d3 { width: 300px; grid-template-columns: 44px 1fr; }
.d3 dt { letter-spacing: -.16px; }
.d3 dd { letter-spacing: 0; }

/* taskbar */
.taskbar { position: relative; display: flex; align-items: center; height: 61px; border-top: 2px solid #6e7688; box-shadow: inset 0 1px 0 #c8cfdf;
  background:
    linear-gradient(90deg, #0a0a0a 0 190px, transparent 196px calc(100% - 244px), #0a0a0a calc(100% - 234px)),
    linear-gradient(90deg, transparent 2590px, #8089a0 2680px),
    radial-gradient(ellipse 80px 35px at 2530px 56px, #dedadc, transparent),
    radial-gradient(ellipse 80px 34px at 2440px 18px, #c9c8d6, transparent),
    radial-gradient(ellipse 120px 25px at 2120px 30px, #c9cbdc, transparent),
    radial-gradient(ellipse 140px 30px at 1800px 40px, #bcc1d8, transparent),
    radial-gradient(ellipse 110px 25px at 1600px 20px, #bfc3d8, transparent),
    radial-gradient(ellipse 120px 35px at 1180px 40px, #b9bdd3, transparent),
    linear-gradient(90deg, #9aa6c3, #a9b2cf 30%, #a0acca 60%, #a7b0cc); }
.slot { display: flex; align-items: center; justify-content: center; height: 59px; flex: none; }
.btn { border: 2px solid #424c66; border-radius: 4px; background: linear-gradient(rgba(255,255,255,.55), rgba(255,255,255,.2)); box-shadow: inset 0 0 0 1.5px rgba(255,255,255,.6); }
.dbl { box-shadow: inset 0 0 0 1.5px rgba(255,255,255,.6), 6px 0 0 -1px #b4bdd2, 7px 0 0 0 #5b6680; }
.s-start { width: 60px; margin-left: 12px; } .s-start svg { width: 60px; height: 59px; }
.s-ie { width: 48px; margin-left: 42px; } .s-ie svg { width: 48px; height: 50px; }
.s-exp { width: 83px; margin-left: 28px; background: linear-gradient(100deg, #888, #e4e4e6 35%, #c6cad4); } .s-exp svg { width: 52px; height: 48px; margin-right: 3px; }
.s-wmp { width: 50px; margin-left: 36px; } .s-wmp svg { width: 50px; height: 44px; }
.s-chr { width: 93px; margin-left: 23px; } .s-chr svg { width: 48px; height: 48px; }
.s-play { width: 93px; margin-left: 4px; } .s-play svg { width: 44px; height: 50px; margin-right: 8px; }
.s-calc { width: 38px; margin-left: 31px; } .s-calc svg { width: 38px; height: 48px; }
.s-doc { width: 38px; margin-left: 59px; } .s-doc svg { width: 38px; height: 46px; margin-top: 4px; }
.s-word { width: 85px; margin-left: 31px; } .s-word svg, .s-ppt svg { width: 48px; height: 50px; margin-right: 4px; margin-bottom: 2px; }
.s-ppt { width: 86px; margin-left: 11px; }
.pt { font: bold 15px "Open Sans", sans-serif; fill: #fff; }
.ct { font: bold 14px "Liberation Sans", sans-serif; fill: #456bab; }
.wt { font: bold italic 19px "Liberation Serif", serif; fill: #1f4a99; }
.tray { display: flex; align-items: center; margin-left: auto; height: 59px; color: #fff; letter-spacing: -.74px; }
.en { width: 22px; margin: -8px 13px 0 0; letter-spacing: -1.1px; }
.kb { width: 24px; height: 20px; margin-top: -4px; }
.more { margin: 2px 19px 0 19px; border: 7px solid transparent; border-bottom: 9px solid #f4f4f4; border-top: 0; }
.flag { width: 26px; height: 26px; }
.net { width: 24px; height: 26px; margin: 0 13px; }
.vol { width: 26px; height: 26px; }
.clock { display: flex; flex-direction: column; align-items: center; width: 76px; margin: 0 14px 0 20px; line-height: 27px; }
.desk { width: 20px; height: 59px; margin-right: 3px; border: 2px solid #5f6460; background: linear-gradient(160deg, #555 20%, #0c0c0c 50%); }
```
